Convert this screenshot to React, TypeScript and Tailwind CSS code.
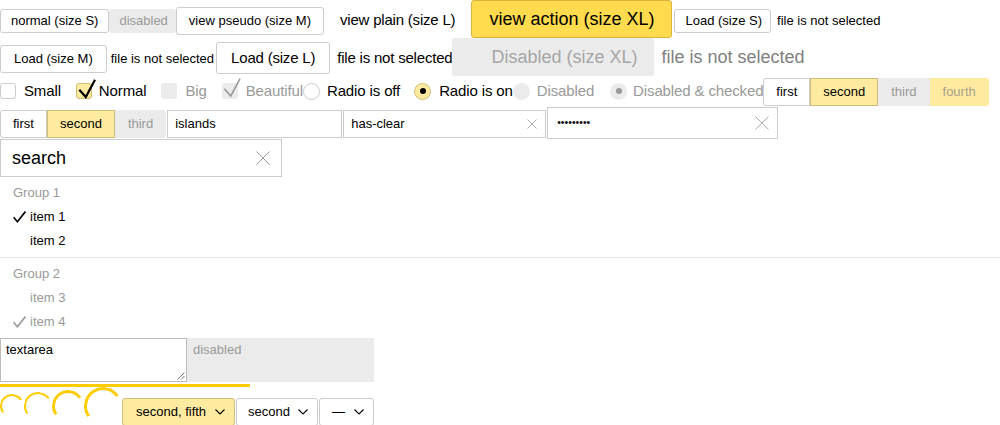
import React from "react";

const btnS = "inline-block whitespace-nowrap h-[24px] leading-[22px] text-[13px] px-[10px] border border-[#ccc] rounded-[3px] bg-white text-black";
const btnSLoad = "inline-block whitespace-nowrap h-[24px] leading-[22px] text-[13px] pl-[10px] pr-[8px] border border-[#ccc] rounded-[3px] bg-white text-black";
const btnSDis = "inline-block whitespace-nowrap h-[24px] leading-[24px] text-[13px] pl-[10px] pr-[8px] rounded-[3px] bg-[#ebebeb] text-[#999]";
const btnM = "inline-block whitespace-nowrap h-[28px] leading-[26px] text-[13px] px-[12px] border border-[#ccc] rounded-[3px] bg-white text-black";
const btnMLoad = "inline-block whitespace-nowrap h-[28px] leading-[26px] text-[13px] px-[13px] border border-[#ccc] rounded-[3px] bg-white text-black";
const btnL = "inline-block whitespace-nowrap h-[32px] leading-[30px] text-[15px] tracking-[-0.2px] px-[15px] border border-transparent text-black";
const btnLLoad = "inline-block whitespace-nowrap h-[32px] leading-[30px] text-[15px] tracking-[-0.2px] px-[14px] border border-[#ccc] rounded-[3px] bg-white text-black";
const btnXL = "inline-block whitespace-nowrap h-[38px] leading-[36px] text-[18px] px-[17px] border border-[#d9b43c] rounded-[3px] bg-[#ffdb4d] text-black";
const btnXLDis = "inline-block whitespace-nowrap h-[38px] leading-[38px] text-[18px] pl-[39px] w-[202px] rounded-[3px] bg-[#ebebeb] text-[#a6a6a6]";

function Tick({ color, width }: { color: string; width: number }) {
  return (
    <svg className="absolute left-[-2px] top-[-6px]" width="22" height="24" viewBox="0 0 22 24">
      <path d="M4.3 11.7 L10.8 19 L20 1.7" fill="none" stroke={color} strokeWidth={width} strokeLinejoin="miter" />
    </svg>
  );
}

function MenuTick({ color }: { color: string }) {
  return (
    <svg width="13" height="12" viewBox="0 0 13 12" className="shrink-0">
      <path d="M0.6 6.2 L4.4 10.8 L12.4 0.6" fill="none" stroke={color} strokeWidth="1.6" />
    </svg>
  );
}

function ClearX({ size, color }: { size: number; color: string }) {
  return (
    <svg width={size} height={size} viewBox={`0 0 ${size} ${size}`} className="shrink-0">
      <path d={`M0.5 0.5 L${size - 0.5} ${size - 0.5} M${size - 0.5} 0.5 L0.5 ${size - 0.5}`} stroke={color} strokeWidth="1" fill="none" />
    </svg>
  );
}

function Chevron() {
  return (
    <svg width="10" height="6" viewBox="0 0 10 6" className="shrink-0">
      <path d="M0.5 0.5 L5 5 L9.5 0.5" stroke="#000" strokeWidth="1.1" fill="none" />
    </svg>
  );
}

export default function App() {
  return (
    <div className="w-[1000px] h-[425px] overflow-hidden bg-white text-black font-['Liberation_Sans',Arial,sans-serif]">
      {/* Row 1 */}
      <div className="flex items-baseline h-[38px]">
        <span className={btnS}>normal (size S)</span>
        <span className={btnSDis}>disabled</span>
        <span className={btnM}>view pseudo (size M)</span>
        <span className={btnL}>view plain (size L)</span>
        <span className={btnXL}>view action (size XL)</span>
        <span className={btnSLoad + " ml-[2px]"}>Load (size S)</span>
        <span className="ml-[6px] text-[13px] whitespace-nowrap">file is not selected</span>
      </div>

      {/* Row 2 */}
      <div className="flex items-baseline h-[38px]">
        <span className={btnMLoad}>Load (size M)</span>
        <span className="ml-[4px] text-[13px] whitespace-nowrap">file is not selected</span>
        <span className={btnLLoad + " ml-[2px]"}>Load (size L)</span>
        <span className="ml-[7px] text-[15px] tracking-[-0.2px] whitespace-nowrap">file is not selected</span>
        <span className={btnXLDis}>Disabled (size XL)</span>
        <span className="ml-[7px] text-[18px] whitespace-nowrap text-[#808080]">file is not selected</span>
      </div>

      {/* Row 3 */}
      <div className="flex items-start h-[30px] text-[15px] tracking-[-0.13px]">
        <label className="inline-flex items-center h-[30px] mr-[15px]">
          <span className="relative w-[16px] h-[16px] rounded-[3px] border border-[#ccc] bg-white" />
          <span className="ml-[8px]">Small</span>
        </label>
        <label className="inline-flex items-center h-[30px] mr-[15px]">
          <span className="relative w-[16px] h-[16px] rounded-[3px] border border-[#d0bc74] bg-[#ffeba0]">
            <Tick color="#000" width={2.2} />
          </span>
          <span className="ml-[7px]">Normal</span>
        </label>
        <label className="inline-flex items-center h-[30px] mr-[15px] text-[#999]">
          <span className="relative w-[16px] h-[16px] rounded-[3px] bg-[#ebebeb]" />
          <span className="ml-[8px]">Big</span>
        </label>
        <label className="inline-flex items-center h-[30px] text-[#999]">
          <span className="relative w-[16px] h-[16px] rounded-[3px] bg-[#ebebeb]">
            <Tick color="#999" width={1.6} />
          </span>
          <span className="ml-[8px]">Beautiful</span>
        </label>
        <label className="inline-flex items-center h-[30px] mr-[14px]">
          <span className="w-[17px] h-[17px] rounded-full border border-[#ccc] bg-white" />
          <span className="ml-[7px]">Radio is off</span>
        </label>
        <label className="inline-flex items-center h-[30px]">
          <span className="flex items-center justify-center w-[17px] h-[17px] rounded-full border border-[#d0bc74] bg-[#ffeba0]">
            <span className="w-[6px] h-[6px] rounded-full bg-black" />
          </span>
          <span className="ml-[8px]">Radio is on</span>
        </label>
        <label className="inline-flex items-center h-[30px] mr-[16px] text-[#999]">
          <span className="w-[17px] h-[17px] rounded-full bg-[#ebebeb]" />
          <span className="ml-[7px]">Disabled</span>
        </label>
        <label className="inline-flex items-center h-[30px] text-[#999]">
          <span className="flex items-center justify-center w-[17px] h-[17px] rounded-full bg-[#ebebeb]">
            <span className="w-[6px] h-[6px] rounded-full bg-[#999]" />
          </span>
          <span className="ml-[6px]">Disabled &amp; checked</span>
        </label>
        <div className="flex mt-[2px] text-[13px] tracking-normal">
          <span className="h-[28px] leading-[26px] px-[12px] border border-[#ccc] rounded-l-[3px] bg-white">first</span>
          <span className="h-[28px] leading-[26px] px-[12px] border border-[#d0bc74] bg-[#ffeba0]">second</span>
          <span className="h-[28px] leading-[28px] px-[13px] bg-[#ebebeb] text-[#999]">third</span>
          <span className="h-[28px] leading-[28px] px-[13px] rounded-r-[3px] bg-[#ffeba0] text-[#a8a08a]">fourth</span>
        </div>
      </div>

      {/* Row 4 */}
      <div className="flex items-start h-[33px] text-[13px]">
        <div className="flex mt-[4px]">
          <span className="h-[28px] leading-[26px] px-[12px] border border-[#ccc] rounded-l-[3px] bg-white">first</span>
          <span className="h-[28px] leading-[26px] px-[12px] border border-[#d0bc74] bg-[#ffeba0]">second</span>
          <span className="h-[28px] leading-[28px] px-[13px] rounded-r-[3px] bg-[#ebebeb] text-[#999]">third</span>
        </div>
        <div className="ml-px mt-[4px] flex items-center w-[175px] h-[28px] border border-[#ccc] pl-[7px]">islands</div>
        <div className="ml-px mt-[4px] flex items-center justify-between w-[203px] h-[28px] border border-[#ccc] pl-[7px] pr-[8px]">
          <span>has-clear</span>
          <ClearX size={10} color="#aaa" />
        </div>
        <div className="ml-px mt-[1px] flex items-center justify-between w-[231px] h-[32px] border border-[#ccc] pl-[9px] pr-[8px]">
          <span className="text-[10.5px]">•••••••••</span>
          <ClearX size={14} color="#aaa" />
        </div>
      </div>

      {/* Row 5 search */}
      <div className="flex">
        <div className="flex items-center justify-between w-[282px] h-[38px] border border-[#ccc] pl-[11px] pr-[11px] text-[18px]">
          <span>search</span>
          <ClearX size={14} color="#999" />
        </div>
      </div>

      {/* Menu */}
      <div className="pt-[4px] pb-[4px] text-[13px]">
        <div className="h-[24px] leading-[24px] pl-[13px] text-[#999]">Group 1</div>
        <div className="h-[24px] flex items-center pl-[13px]">
          <MenuTick color="#000" />
          <span className="ml-[4px]">item 1</span>
        </div>
        <div className="h-[24px] leading-[24px] pl-[30px]">item 2</div>
        <div className="mt-[4px] mb-[4px] h-px bg-[#e6e6e6]" />
        <div className="h-[24px] leading-[24px] pl-[13px] text-[#999]">Group 2</div>
        <div className="h-[24px] leading-[24px] pl-[30px] text-[#999]">item 3</div>
        <div className="h-[24px] flex items-center pl-[13px] text-[#999]">
          <MenuTick color="#999" />
          <span className="ml-[4px]">item 4</span>
        </div>
      </div>

      {/* Textareas */}
      <div className="flex text-[13px]">
        <div className="relative w-[187px] h-[44px] border border-[#bbb] pl-[5px] pt-[3px] leading-[15px]">
          textarea
          <svg className="absolute right-[1px] bottom-[1px]" width="9" height="9" viewBox="0 0 9 9">
            <path d="M8.5 1.5 L1.5 8.5 M8.5 5 L5 8.5" stroke="#777" strokeWidth="1" fill="none" />
          </svg>
        </div>
        <div className="w-[187px] h-[44px] bg-[#ebebeb] text-[#999] pl-[6px] pt-[4px] leading-[15px]">disabled</div>
      </div>

      {/* Progress */}
      <div className="mt-[2px] h-[3px] w-[250px] bg-[#fc0]" />

      {/* Spinners + selects */}
      <div className="flex items-start">
        <div className="flex items-center h-[38px]">
          <span className="w-[24px] h-[24px] rounded-full border-2 border-transparent border-t-[#fc0] border-l-[#fc0] rotate-[10deg]" />
          <span className="w-[28px] h-[28px] rounded-full border-2 border-transparent border-t-[#fc0] border-l-[#fc0] rotate-[10deg]" />
          <span className="w-[32px] h-[32px] rounded-full border-[3px] border-transparent border-t-[#fc0] border-l-[#fc0] rotate-[10deg]" />
          <span className="w-[38px] h-[38px] rounded-full border-[3px] border-transparent border-t-[#fc0] border-l-[#fc0] rotate-[10deg]" />
        </div>
        <div className="flex mt-[11px] text-[13px]">
          <span className="flex items-center h-[28px] pl-[13px] pr-[9px] border border-[#d0bc74] rounded-[3px] bg-[#ffeba0] whitespace-nowrap">
            second, fifth<span className="ml-[9px] flex"><Chevron /></span>
          </span>
          <span className="ml-px flex items-center h-[28px] pl-[11px] pr-[9px] border border-[#ccc] rounded-[3px] bg-white whitespace-nowrap">
            second<span className="ml-[8px] flex"><Chevron /></span>
          </span>
          <span className="ml-px flex items-center h-[28px] pl-[12px] pr-[9px] border border-[#ccc] rounded-[3px] bg-white whitespace-nowrap">
            —<span className="ml-[9px] flex"><Chevron /></span>
          </span>
        </div>
      </div>
    </div>
  );
}
